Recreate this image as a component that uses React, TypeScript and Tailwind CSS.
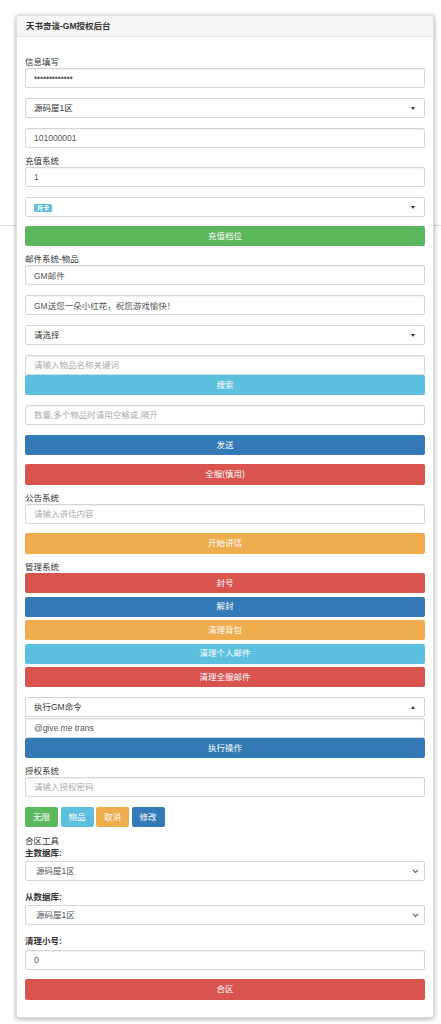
import React from "react";

const font = { fontFamily: '"Liberation Sans", "Noto Sans CJK SC", sans-serif' };

const Label = ({ children, bold, className = "" }: { children: React.ReactNode; bold?: boolean; className?: string }) => (
    <div className={`h-[11px] leading-[11px] text-[8.5px] text-[#333] ${bold ? "font-bold" : ""} ${className}`}>{children}</div>
);

const Field = ({
    value,
    placeholder,
    type = "text",
    className = "",
}: {
    value?: string;
    placeholder?: string;
    type?: string;
    className?: string;
}) => (
    <input
        type={type}
        readOnly
        defaultValue={value}
        placeholder={placeholder}
        className={`block h-[20px] w-full rounded-[2px] border border-[#d6d6d6] bg-white px-[8px] text-[8.5px] text-[#555] shadow-[inset_0_1px_1px_rgba(0,0,0,0.06)] outline-none placeholder:text-[#aaa] ${className}`}
    />
);

const FakeSelect = ({ children, up, className = "" }: { children: React.ReactNode; up?: boolean; className?: string }) => (
    <div
        className={`flex h-[20px] w-full items-center justify-between rounded-[2px] border border-[#d6d6d6] bg-white pl-[8px] pr-[9px] text-[8.5px] text-[#333] ${className}`}
    >
        <span>{children}</span>
        {up ? (
            <span className="h-0 w-0 border-x-[2.5px] border-b-[3px] border-x-transparent border-b-[#333]" />
        ) : (
            <span className="h-0 w-0 border-x-[2.5px] border-t-[3px] border-x-transparent border-t-[#333]" />
        )}
    </div>
);

const NativeSelect = ({ children, className = "" }: { children: React.ReactNode; className?: string }) => (
    <div
        className={`flex h-[20px] w-full items-center justify-between rounded-[2px] border border-[#d6d6d6] bg-white pl-[10px] pr-[5px] text-[8.5px] text-[#555] ${className}`}
    >
        <span>{children}</span>
        <svg width="7" height="5" viewBox="0 0 7 5" fill="none">
            <path d="M1 1l2.5 2.5L6 1" stroke="#666" strokeWidth="1.2" />
        </svg>
    </div>
);

const Btn = ({ children, color, className = "" }: { children: React.ReactNode; color: string; className?: string }) => (
    <div
        className={`flex h-[20px] w-full items-center justify-center rounded-[2px] text-[8.5px] text-white ${color} ${className}`}
    >
        {children}
    </div>
);

const SmallBtn = ({ children, color }: { children: React.ReactNode; color: string }) => (
    <div className={`flex h-[20px] w-[33px] items-center justify-center rounded-[2px] text-[8.5px] text-white ${color}`}>
        {children}
    </div>
);

const green = "bg-[#5cb85c]";
const cyan = "bg-[#5bc0de]";
const blue = "bg-[#337ab7]";
const red = "bg-[#d9534f]";
const orange = "bg-[#f0ad4e]";

export default function App() {
    return (
        <div className="relative min-h-[1024px] bg-white pt-[15px] pb-[7px]" style={font}>
            <div className="absolute left-0 right-0 top-[225px] h-px bg-[#dcdcdc]" />
            <div className="relative z-10 ml-[16px] w-[418px] overflow-hidden rounded-[3px] border border-[#ddd] bg-white shadow-[0_1px_5px_rgba(0,0,0,0.35)]">
                <div className="flex h-[21px] items-center border-b border-[#e6e6e6] bg-[#f5f5f5] px-[9px] text-[8.5px] font-bold text-[#333]">
                    天书奇谈-GM授权后台
                </div>
                <div className="px-[8px] pt-[20px] pb-[17px]">
                    <Label>信息填写</Label>
                    <Field type="password" value="1234567890123" />
                    <FakeSelect className="mt-[10px]">源码屋1区</FakeSelect>
                    <Field className="mt-[10px]" value="101000001" />

                    <Label className="mt-[8px]">充值系统</Label>
                    <Field value="1" />
                    <FakeSelect className="mt-[10px]">
                        <span className="inline-flex h-[8px] items-center rounded-[1.5px] bg-[#5bc0de] px-[3px] text-[6px] font-bold text-white">
                            月卡
                        </span>
                    </FakeSelect>
                    <Btn color={green} className="mt-[9px]">充值档位</Btn>

                    <Label className="mt-[8px]">邮件系统-物品</Label>
                    <Field value="GM邮件" />
                    <Field className="mt-[10px]" value="GM送您一朵小红花，祝您游戏愉快！" />
                    <FakeSelect className="mt-[10px]">请选择</FakeSelect>
                    <Field className="mt-[10px]" placeholder="请输入物品名称关键词" />
                    <Btn color={cyan}>搜索</Btn>
                    <Field className="mt-[10px]" placeholder="数量,多个物品时请用空格或,隔开" />
                    <Btn color={blue} className="mt-[10px]">发送</Btn>
                    <Btn color={red} className="mt-[9px] h-[21px]">全服(慎用)</Btn>

                    <Label className="mt-[8px]">公告系统</Label>
                    <Field placeholder="请输入讲话内容" />
                    <Btn color={orange} className="mt-[9px] h-[21px]">开始讲话</Btn>

                    <Label className="mt-[8px]">管理系统</Label>
                    <div className="flex flex-col gap-[3.5px]">
                        <Btn color={red}>封号</Btn>
                        <Btn color={blue}>解封</Btn>
                        <Btn color={orange}>清理背包</Btn>
                        <Btn color={cyan}>清理个人邮件</Btn>
                        <Btn color={red}>清理全服邮件</Btn>
                    </div>
                    <FakeSelect className="mt-[10px]" up>执行GM命令</FakeSelect>
                    <Field className="mt-px" value="@give me trans" />
                    <Btn color={blue}>执行操作</Btn>

                    <Label className="mt-[8px]">授权系统</Label>
                    <Field placeholder="请输入授权密码" />
                    <div className="mt-[10px] flex gap-[2.5px]">
                        <SmallBtn color={green}>无限</SmallBtn>
                        <SmallBtn color={cyan}>物品</SmallBtn>
                        <SmallBtn color={orange}>取消</SmallBtn>
                        <SmallBtn color={blue}>修改</SmallBtn>
                    </div>

                    <Label className="mt-[9px]">合区工具</Label>
                    <Label bold className="mt-px">主数据库:</Label>
                    <NativeSelect className="mt-[2px]">源码屋1区</NativeSelect>
                    <Label bold className="mt-[11px]">从数据库:</Label>
                    <NativeSelect className="mt-[2px]">源码屋1区</NativeSelect>
                    <Label bold className="mt-[11px]">清理小号:</Label>
                    <Field className="mt-[3px]" value="0" />
                    <Btn color={red} className="mt-[9px] h-[21px]">合区</Btn>
                </div>
            </div>
        </div>
    );
}
